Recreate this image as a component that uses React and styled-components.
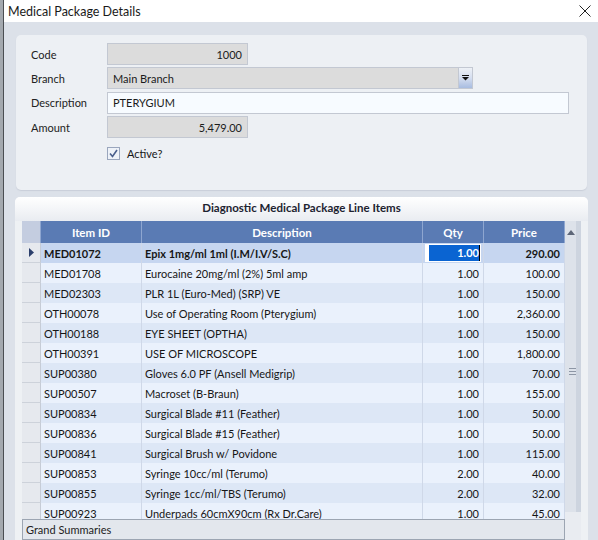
import React from 'react';
import styled, { createGlobalStyle } from 'styled-components';

const FONT = `"Lato", "Noto Sans", sans-serif`;

const Global = createGlobalStyle`
  html, body { margin: 0; padding: 0; }
  body {
    width: 598px; height: 540px; overflow: hidden;
    font-family: ${FONT}; font-size: 11px; color: #161616;
    background: #dce1e9;
  }
  * { box-sizing: border-box; }
`;

const Screen = styled.div`
  display: flex; width: 598px; height: 540px; overflow: hidden;
`;
const BackEdge = styled.div`
  width: 4px; flex: none; background: #a4a9af; border-right: 1px solid #4b4e53;
`;
const Dialog = styled.div`
  flex: 1; display: flex; flex-direction: column; min-width: 0;
`;
const TitleBar = styled.div`
  height: 22px; flex: none; background: #fff;
  display: flex; align-items: center; justify-content: space-between;
  padding: 0 7px 0 4px;
`;
const Title = styled.div`
  font-size: 12.5px; color: #1a1a1a;
`;
const Body = styled.div`
  flex: 1; min-height: 0; background: #dce1e9;
  padding: 13px 10px 0 11px;
  display: flex; flex-direction: column; gap: 7px;
`;
const FormPanel = styled.div`
  flex: none; height: 155px; margin: 0 1px;
  background: #edf0f4; border-radius: 5px;
  box-shadow: 0 1px 1px rgba(120, 130, 150, 0.18);
  padding: 8px 0 0 15px;
  display: flex; flex-direction: column; gap: 2.4px;
`;
const FieldRow = styled.div`
  display: flex; align-items: center; height: 22px;
`;
const Label = styled.div`
  width: 76px; flex: none; color: #222;
`;
const Input = styled.div`
  width: ${p => p.$w}px; height: 22px;
  border: 1px solid #c3c8d2;
  background: ${p => (p.$editable ? '#f7fbff' : '#dcdcdc')};
  display: flex; align-items: center;
  justify-content: ${p => (p.$right ? 'flex-end' : 'flex-start')};
  padding: 0 5px;
  position: relative;
  color: #1b1b1b;
`;
const DropButton = styled.div`
  position: absolute; right: 0; top: 0; bottom: 0; width: 14px;
  background: linear-gradient(#eef1f6, #d5def0 50%, #a8bce0);
  border-left: 1px solid #c3c8d2;
  display: flex; align-items: center; justify-content: center;
`;
const CheckRow = styled.div`
  display: flex; align-items: center; gap: 7px;
  padding-left: 76px; margin-top: 6px; height: 14px;
`;
const Box = styled.div`
  width: 13px; height: 13px; border: 1px solid #9aa6bd; background: #eef2f8;
  display: flex; align-items: center; justify-content: center;
`;

const GridPanel = styled.div`
  flex: 1; min-height: 0; background: #eef1f4;
  border-radius: 5px 5px 0 0;
  display: flex; flex-direction: column;
`;
const GridTitle = styled.div`
  height: 24px; flex: none; padding-bottom: 4px;
  background: linear-gradient(#ffffff, #e9ecf1);
  border-radius: 5px 5px 0 0;
  display: flex; align-items: center; justify-content: center;
  font-weight: 700; font-size: 11.5px; color: #1d2330;
`;
const GridArea = styled.div`
  flex: 1; min-height: 0; display: flex; padding: 0 7px;
`;
const TableCol = styled.div`
  width: 543px; flex: none; display: flex; flex-direction: column;
`;
const COLS = '19px 101px 281px 61px 81px';
const HeaderRow = styled.div`
  display: grid; grid-template-columns: ${COLS}; height: 22px; flex: none;
  background: #5a7bb4;
`;
const HeaderCell = styled.div`
  display: flex; align-items: center; justify-content: center;
  color: #fff; font-weight: 700; font-size: 11.5px;
  border-right: 1px solid #8ea6d0;
  background: ${p => (p.$ind ? '#c4cde0' : 'transparent')};
`;
const Rows = styled.div`
  height: 276px; flex: none; overflow: hidden;
`;
const Row = styled.div`
  display: grid; grid-template-columns: ${COLS}; height: 20px;
  background: ${p => (p.$sel ? '#c6d6f0' : p.$alt ? '#eaf1fc' : '#dde7f6')};
  font-weight: ${p => (p.$sel ? 700 : 400)};
`;
const Indicator = styled.div`
  background: #e6e9ee;
  border-right: 1px solid #c6ccd6; border-bottom: 1px solid #cdd2da;
  display: flex; align-items: center; justify-content: center;
`;
const Cell = styled.div`
  display: flex; align-items: center; min-width: 0; white-space: nowrap; overflow: hidden;
  justify-content: ${p => (p.$right ? 'flex-end' : 'flex-start')};
  padding: 0 ${p => (p.$right ? '4px' : '3px')};
  border-right: 1px solid #cfd8e8;
`;
const EditCell = styled.div`
  display: flex; align-items: stretch; padding: 1px 2px;
  border-right: 1px solid #cfd8e8;
`;
const Editor = styled.div`
  flex: 1; background: #fff; display: flex; align-items: center;
  padding: 0 1px 0 4px;
`;
const Selection = styled.span`
  flex: 1; background: #0a64d2; color: #fff; text-align: right;
  line-height: 16px;
`;
const Caret = styled.span`
  width: 1px; height: 16px; background: #000; flex: none;
`;
const Summary = styled.div`
  height: 21px; flex: none; border: 1px solid #9ca5b2; background: #e3e7ed;
  display: flex; align-items: center; padding: 0 3px; color: #222;
`;
const ScrollCol = styled.div`
  width: 16px; flex: none; display: flex; flex-direction: column;
`;
const Track = styled.div`
  height: 291px; flex: none;
  background: linear-gradient(to right, #dde2ea 0 11px, #cdd4df 11px);
  display: flex; flex-direction: column; align-items: center; position: relative;
  padding-top: 9px;
`;
const Grip = styled.div`
  position: absolute; top: 147px; left: 4px; width: 7px;
  display: flex; flex-direction: column; gap: 2px;
  & > i { display: block; height: 1px; background: #8d96a5; }
`;
const ScrollRest = styled.div`
  flex: 1; background: #e9ecf1;
`;

const rows = [
  ['MED01072', 'Epix 1mg/ml 1ml (I.M/I.V/S.C)', '1.00', '290.00'],
  ['MED01708', 'Eurocaine 20mg/ml (2%) 5ml amp', '1.00', '100.00'],
  ['MED02303', 'PLR 1L (Euro-Med) (SRP) VE', '1.00', '150.00'],
  ['OTH00078', 'Use of Operating Room (Pterygium)', '1.00', '2,360.00'],
  ['OTH00188', 'EYE SHEET (OPTHA)', '1.00', '150.00'],
  ['OTH00391', 'USE OF MICROSCOPE', '1.00', '1,800.00'],
  ['SUP00380', 'Gloves 6.0 PF (Ansell Medigrip)', '1.00', '70.00'],
  ['SUP00507', 'Macroset (B-Braun)', '1.00', '155.00'],
  ['SUP00834', 'Surgical Blade #11 (Feather)', '1.00', '50.00'],
  ['SUP00836', 'Surgical Blade #15 (Feather)', '1.00', '50.00'],
  ['SUP00841', 'Surgical Brush w/ Povidone', '1.00', '115.00'],
  ['SUP00853', 'Syringe 10cc/ml (Terumo)', '2.00', '40.00'],
  ['SUP00855', 'Syringe 1cc/ml/TBS (Terumo)', '2.00', '32.00'],
  ['SUP00923', 'Underpads 60cmX90cm (Rx Dr.Care)', '1.00', '45.00'],
];

export default function App() {
  return (
    <>
      <Global />
      <Screen>
        <BackEdge />
        <Dialog>
          <TitleBar>
            <Title>Medical Package Details</Title>
            <svg width="12" height="12" viewBox="0 0 12 12">
              <path d="M0.5 0.5L11.5 11.5M11.5 0.5L0.5 11.5" stroke="#222" strokeWidth="1" fill="none" />
            </svg>
          </TitleBar>
          <Body>
            <FormPanel>
              <FieldRow>
                <Label>Code</Label>
                <Input $w={141} $right>1000</Input>
              </FieldRow>
              <FieldRow>
                <Label>Branch</Label>
                <Input $w={366}>
                  Main Branch
                  <DropButton>
                    <svg width="7" height="6" viewBox="0 0 7 6">
                      <rect x="0" y="0" width="7" height="1" fill="#111" />
                      <path d="M0 2H7L3.5 5.5Z" fill="#111" />
                    </svg>
                  </DropButton>
                </Input>
              </FieldRow>
              <FieldRow>
                <Label>Description</Label>
                <Input $w={462} $editable>PTERYGIUM</Input>
              </FieldRow>
              <FieldRow>
                <Label>Amount</Label>
                <Input $w={141} $right>5,479.00</Input>
              </FieldRow>
              <CheckRow>
                <Box>
                  <svg width="9" height="9" viewBox="0 0 9 9">
                    <path d="M1 4.5L3.5 7.5L8 1" stroke="#4a5f8c" strokeWidth="1.6" fill="none" />
                  </svg>
                </Box>
                <span>Active?</span>
              </CheckRow>
            </FormPanel>
            <GridPanel>
              <GridTitle>Diagnostic Medical Package Line Items</GridTitle>
              <GridArea>
                <TableCol>
                  <HeaderRow>
                    <HeaderCell $ind />
                    <HeaderCell>Item ID</HeaderCell>
                    <HeaderCell>Description</HeaderCell>
                    <HeaderCell>Qty</HeaderCell>
                    <HeaderCell>Price</HeaderCell>
                  </HeaderRow>
                  <Rows>
                    {rows.map((r, i) => (
                      <Row key={r[0]} $sel={i === 0} $alt={i % 2 === 1}>
                        <Indicator>
                          {i === 0 && (
                            <svg width="5" height="9" viewBox="0 0 5 9">
                              <path d="M0 0L5 4.5L0 9Z" fill="#2b3f6c" />
                            </svg>
                          )}
                        </Indicator>
                        <Cell>{r[0]}</Cell>
                        <Cell>{r[1]}</Cell>
                        {i === 0 ? (
                          <EditCell>
                            <Editor>
                              <Selection>{r[2]}</Selection>
                              <Caret />
                            </Editor>
                          </EditCell>
                        ) : (
                          <Cell $right>{r[2]}</Cell>
                        )}
                        <Cell $right>{r[3]}</Cell>
                      </Row>
                    ))}
                  </Rows>
                  <Summary>Grand Summaries</Summary>
                </TableCol>
                <ScrollCol>
                  <Track>
                    <svg width="8" height="5" viewBox="0 0 8 5" style={{ marginRight: 5 }}>
                      <path d="M0 5L4 0L8 5Z" fill="#5d6678" />
                    </svg>
                    <Grip><i /><i /><i /></Grip>
                  </Track>
                  <ScrollRest />
                </ScrollCol>
              </GridArea>
            </GridPanel>
          </Body>
        </Dialog>
      </Screen>
    </>
  );
}
